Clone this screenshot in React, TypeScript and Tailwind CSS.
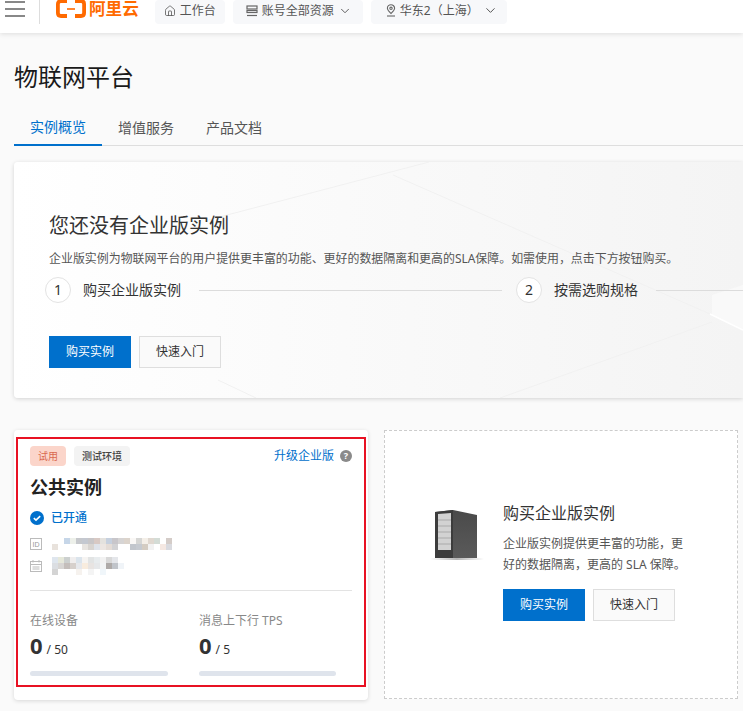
import { ChevronDown, House } from "lucide-react";

const fontStack = "font-['Noto_Sans','Noto_Sans_CJK_SC',sans-serif]";

// mosaics hiding the instance id and the date
const idMosaic = [
  ["", "", "#c6d6e8", "#edf0ea", "#c6c8cc", "#c4c8d0", "#c8c6c8", "#d8c9c4", "#e4e2de", "#c6d0de", "#c8c6ca", "#d6d4d4", "#dcd4cc", "#faf8f6", "#d6d6d4", "#f4efe8", "#e0d8d0", "#d4dcd6", "", "#d4ccc8"],
  ["#e8e2dc", "", "", "", "", "#e8e4e0", "#d8d4d0", "#dfe3ea", "#ece6e2", "#e4dcd6", "#d2d2d4", "", "", "#c2c6cc", "#c6cad0", "#d4ccc2", "#f2f2f2", "", "#f5e8e2", "#d9dadf"],
];
const dateMosaic = [
  ["#dfe6ee", "#e6e8da", "#ccd0cf", "#f0eeee", "#dbe4ec", "#f6f4f2", "#e2e4e4", "#e8ecee", "#f2f2f2", "#d8d8d8", "#e4e6ea", ""],
  ["#dbdee2", "#d8d6d4", "#c4bebb", "#d6d0cc", "#e6e8ec", "#f8ecde", "#e8e4e2", "#e6e8ea", "#f2f4f5", "#aeaaa8", "#c0c4ca", "#f0f4f8"],
  ["#d4d4d4", "", "", "", "#f6f2ee", "", "#f4f4f4", "", "#f0f6fa", "", "", ""],
];

function Mosaic({ rows, cell }: { rows: string[][]; cell: number }) {
  return (
    <div className="flex flex-col">
      {rows.map((row, r) => (
        <div key={r} className="flex">
          {row.map((color, c) => (
            <span key={c} style={{ width: cell, height: cell, background: color || "transparent" }} />
          ))}
        </div>
      ))}
    </div>
  );
}

function TopButton({ className, children }: { className: string; children: React.ReactNode }) {
  return (
    <div className={`flex h-6 items-center rounded-sm bg-[#f7f8fa] pb-[3px] text-xs text-[#555] ${className}`}>
      {children}
    </div>
  );
}

function Header() {
  return (
    <header className="relative z-10 flex h-[33px] items-start bg-white shadow-[0_1px_5px_rgba(0,0,0,0.12)]">
      {/* hamburger */}
      <div className="mt-px ml-[5px] flex h-4 w-5 flex-col justify-between">
        <span className="h-0.5 bg-[#888]" />
        <span className="h-0.5 bg-[#888]" />
        <span className="h-0.5 bg-[#888]" />
      </div>
      <span className="ml-[14px] h-6 w-px bg-[#ddd]" />
      {/* logo */}
      <div className="ml-[16px] flex h-[19px] items-center">
        <svg width="30" height="18" viewBox="0 0 30 18" fill="none" stroke="#ff6a00" strokeWidth="3.8" className="self-start">
          <path d="M11 1H5Q1.9 1 1.9 4V13Q1.9 16 5 16H11" />
          <path d="M19 1H25Q28.1 1 28.1 4V13Q28.1 16 25 16H19" />
          <path d="M11 9H19" strokeWidth="1.6" />
        </svg>
        <span className="ml-[3px] font-['Liberation_Sans','Noto_Sans_CJK_SC',sans-serif] text-[16.6px] leading-[19px] font-bold text-[#ff6a00]">阿里云</span>
      </div>
      <TopButton className="ml-[16px] w-[70px] pl-[9px]">
        <House size={12} strokeWidth={1.6} className="text-[#555]" />
        <span className="ml-[4px]">工作台</span>
      </TopButton>
      <TopButton className="ml-2 w-[130px] pl-[13px]">
        <svg width="12" height="12" viewBox="0 0 12 12" fill="none" stroke="#666" strokeWidth="1.2">
          <rect x="1" y="1" width="10" height="3" />
          <rect x="1" y="5.5" width="10" height="2" />
          <path d="M1 10.5H11" />
        </svg>
        <span className="ml-[4px]">账号全部资源</span>
        <ChevronDown size={14} strokeWidth={1.6} className="ml-[4px] text-[#555]" />
      </TopButton>
      <TopButton className="ml-2 w-[136px] pl-[14px]">
        <svg width="12" height="13" viewBox="0 0 12 13" fill="none" stroke="#666" strokeWidth="1.1">
          <path d="M6 9.5C4 7.6 2.4 6.2 2.4 4.3A3.6 3.6 0 0 1 9.6 4.3C9.6 6.2 8 7.6 6 9.5Z" />
          <circle cx="6" cy="4.3" r="1.2" />
          <path d="M2 12H10" />
        </svg>
        <span className="ml-[3px]">华东2（上海）</span>
        <ChevronDown size={15} strokeWidth={1.6} className="ml-[4px] text-[#555]" />
      </TopButton>
    </header>
  );
}

function Tabs() {
  return (
    <div className="mt-[18px] flex h-[34px] border-b border-[#dedede] text-sm">
      <div className="flex h-[34px] items-center border-b-2 border-[#0070cc] px-4 pb-0.5 text-[#0070cc]">实例概览</div>
      <div className="flex h-[33px] items-center px-4 pb-0.5 text-[#555]">增值服务</div>
      <div className="flex h-[33px] items-center px-4 pb-0.5 text-[#555]">产品文档</div>
    </div>
  );
}

function Step({ n, label, lineClass }: { n: number; label: string; lineClass: string }) {
  return (
    <div className="flex shrink-0 items-center">
      <span className="flex size-[26px] items-center justify-center rounded-full border border-[#e3e3e3] bg-white text-sm text-[#333]">
        {n}
      </span>
      <span className="ml-3 text-sm text-[#333]">{label}</span>
      <span className={`h-px bg-[#dcdcdc] ${lineClass}`} />
    </div>
  );
}

function Banner() {
  return (
    <section className="relative mt-4 h-[236px] overflow-hidden rounded-l bg-gradient-to-r from-white to-[#f4f4f4] pt-[51px] pl-[35px] shadow-[0_1px_4px_rgba(0,0,0,0.16)]">
      {/* faint background lines */}
      <svg className="absolute top-0 left-0" width="729" height="236" fill="none" stroke="#f1f1f1">
        <path d="M698 133L729 123V168L698 153Z" fill="#f9f9f9" stroke="none" />
        <path d="M194 58L415 0M379 13L696 152M486 236L698 160M204 218L242 236" />
        <path d="M696 152L729 168" stroke="#ffffff" strokeWidth="1.5" />
      </svg>
      <div className="relative">
        <h2 className="text-xl leading-[26px] text-[#333]">您还没有企业版实例</h2>
        <p className="mt-[10px] text-[11.95px] leading-[20px] text-[#555]">
          企业版实例为物联网平台的用户提供更丰富的功能、更好的数据隔离和更高的SLA保障。如需使用，点击下方按钮购买。
        </p>
        <div className="mt-[8px] -ml-1 flex items-center">
          <Step n={1} label="购买企业版实例" lineClass="ml-[18px] w-[303px]" />
          <span className="ml-[14px]" />
          <Step n={2} label="按需选购规格" lineClass="ml-[18px] w-[100px]" />
        </div>
        <div className="mt-[33px] flex gap-2">
          <PrimaryButton />
          <SecondaryButton />
        </div>
      </div>
    </section>
  );
}

function PrimaryButton() {
  return <button className="h-8 w-[82px] bg-[#0070cc] text-xs text-white">购买实例</button>;
}

function SecondaryButton() {
  return <button className="h-8 w-[82px] border border-[#dedede] bg-[#fafafa] text-xs text-[#333]">快速入门</button>;
}

function Metric({ label, total, barClass }: { label: string; total: number; barClass: string }) {
  return (
    <div>
      <div className="text-xs leading-5 text-[#888]">{label}</div>
      <div className="mt-[3px] flex h-[22px] items-baseline text-[#333]">
        <span className="text-[22px] leading-[22px] font-bold">0</span>
        <span className="ml-[4px] text-xs">/ {total}</span>
      </div>
      <div className={`mt-[15px] h-[5px] rounded-full bg-[#dfe4ec] ${barClass}`} />
    </div>
  );
}

function InstanceCard() {
  return (
    <div className="h-[270px] rounded bg-white px-[2px] pt-[7px] shadow-[0_1px_4px_rgba(0,0,0,0.14)]">
      <div className="h-[250px] border-2 border-[#e81123] px-3 pt-[7px]">
        <div className="flex h-5 items-center">
          <span className="flex h-5 w-9 items-center justify-center rounded-sm bg-[#fbd5ca] text-[10px] text-[#d9694f]">试用</span>
          <span className="ml-2 flex h-5 w-14 items-center justify-center rounded-sm bg-[#f3f3f3] text-[10px] font-medium text-[#444]">测试环境</span>
          <span className="ml-auto text-xs text-[#0070cc]">升级企业版</span>
          <span className="ml-[6px] flex size-3 items-center justify-center rounded-full bg-[#8a8a8a] text-[9px] leading-3 font-bold text-white">?</span>
        </div>
        <h3 className="mt-[9px] text-lg leading-[24px] font-bold text-[#222]">公共实例</h3>
        <div className="mt-[9px] flex h-[20px] items-center">
          <svg width="14" height="14" viewBox="0 0 14 14">
            <circle cx="7" cy="7" r="7" fill="#0070cc" />
            <path d="M3.8 7.2L6 9.2L10.2 5.2" fill="none" stroke="#fff" strokeWidth="1.6" />
          </svg>
          <span className="ml-[7px] text-xs font-medium text-[#0070cc]">已开通</span>
        </div>
        <div className="mt-[5px] flex h-[22px] items-center">
          <span className="flex h-3 w-3 items-center justify-center border border-[#bbb] font-['Liberation_Sans',sans-serif] text-[7px] leading-none text-[#999]">ID</span>
          <div className="ml-[10px]">
            <Mosaic rows={idMosaic} cell={6} />
          </div>
        </div>
        <div className="flex h-[22px] items-center">
          <svg width="12" height="12" viewBox="0 0 12 12" fill="none" stroke="#bbb">
            <rect x="0.5" y="1.5" width="11" height="10" />
            <path d="M0.5 4.5H11.5M3 0V2.5M9 0V2.5M2.5 7H9.5M2.5 9H9.5" />
          </svg>
          <div className="ml-[10px]">
            <Mosaic rows={dateMosaic} cell={6} />
          </div>
        </div>
        <div className="mt-[13px] h-px bg-[#e3e3e3]" />
        <div className="mt-5 grid grid-cols-[169px_1fr]">
          <Metric label="在线设备" total={50} barClass="w-[138px]" />
          <Metric label="消息上下行 TPS" total={5} barClass="w-[137px]" />
        </div>
      </div>
    </div>
  );
}

function ServerImage() {
  return (
    <svg width="58" height="56" viewBox="0 0 58 56">
      <defs>
        <linearGradient id="floor" x1="0" y1="0" x2="1" y2="0">
          <stop offset="0" stopColor="#fff" />
          <stop offset="0.5" stopColor="#b5b5b5" />
          <stop offset="1" stopColor="#fff" />
        </linearGradient>
        <linearGradient id="side" x1="0" y1="0" x2="0" y2="1">
          <stop offset="0" stopColor="#4a4a4a" />
          <stop offset="1" stopColor="#5a5a5a" />
        </linearGradient>
      </defs>
      <rect x="1" y="51" width="54" height="2" fill="url(#floor)" />
      <path d="M6 5L24 3L48 8V51H6Z" fill="url(#side)" />
      <path d="M6 5L24 3V51H6Z" fill="#3c3c3c" />
      <path d="M9 7L22 6V43H9Z" fill="#d2d2d2" />
      <path d="M9 13H22M9 19H22M9 25H22M9 31H22M9 37H22" stroke="#aaa" />
    </svg>
  );
}

function BuyCard() {
  return (
    <div className="flex h-[269px] items-center border border-dashed border-[#ccc] bg-white pb-[7px] pl-[44px]">
      <div className="mb-[53px] w-[74px] shrink-0">
        <ServerImage />
      </div>
      <div className="w-[184px]">
        <h3 className="text-base leading-6 text-[#333]">购买企业版实例</h3>
        <p className="mt-[8px] text-xs leading-[21px] text-[#555]">
          企业版实例提供更丰富的功能，更好的数据隔离，更高的 SLA 保障。
        </p>
        <div className="mt-[14px] flex gap-2">
          <PrimaryButton />
          <SecondaryButton />
        </div>
      </div>
    </div>
  );
}

export default function App() {
  return (
    <div className={`h-[711px] w-[743px] overflow-hidden bg-[#fafafa] ${fontStack}`}>
      <Header />
      <main className="pl-[14px]">
        <h1 className="mt-[27px] text-2xl leading-[34px] text-[#1a1a1a]">物联网平台</h1>
        <Tabs />
        <Banner />
        <div className="mt-8 grid w-[724px] grid-cols-[354px_354px] gap-4">
          <InstanceCard />
          <BuyCard />
        </div>
      </main>
    </div>
  );
}
